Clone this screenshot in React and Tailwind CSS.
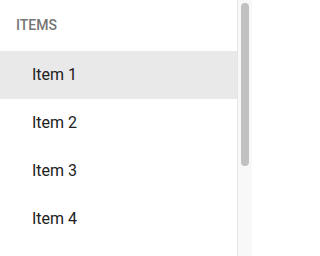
export default function App() {
  const items = ['Item 1', 'Item 2', 'Item 3', 'Item 4'];

  return (
    <div className="flex h-[256px] w-[252px] overflow-hidden bg-white font-['Roboto',sans-serif]">
      {/* List */}
      <div className="flex-1 min-w-0">
        <div className="flex h-[51px] items-center pl-4 text-[14px] font-medium uppercase text-[#757575]">
          Items
        </div>
        <ul>
          {items.map((item, i) => (
            <li
              key={item}
              className={`flex h-12 items-center pl-8 text-[16px] text-[#212121] ${
                i === 0 ? 'bg-[#e9e9e9]' : ''
              }`}
            >
              {item}
            </li>
          ))}
        </ul>
      </div>

      {/* Scrollbar */}
      <div className="w-[15px] shrink-0 border-l border-[#e6e6e6] bg-[#f8f8f8] pl-[3px] pr-[3px] pt-[3px]">
        <div className="h-[163px] w-[8px] rounded-full bg-[#c1c1c1]" />
      </div>
    </div>
  );
}
